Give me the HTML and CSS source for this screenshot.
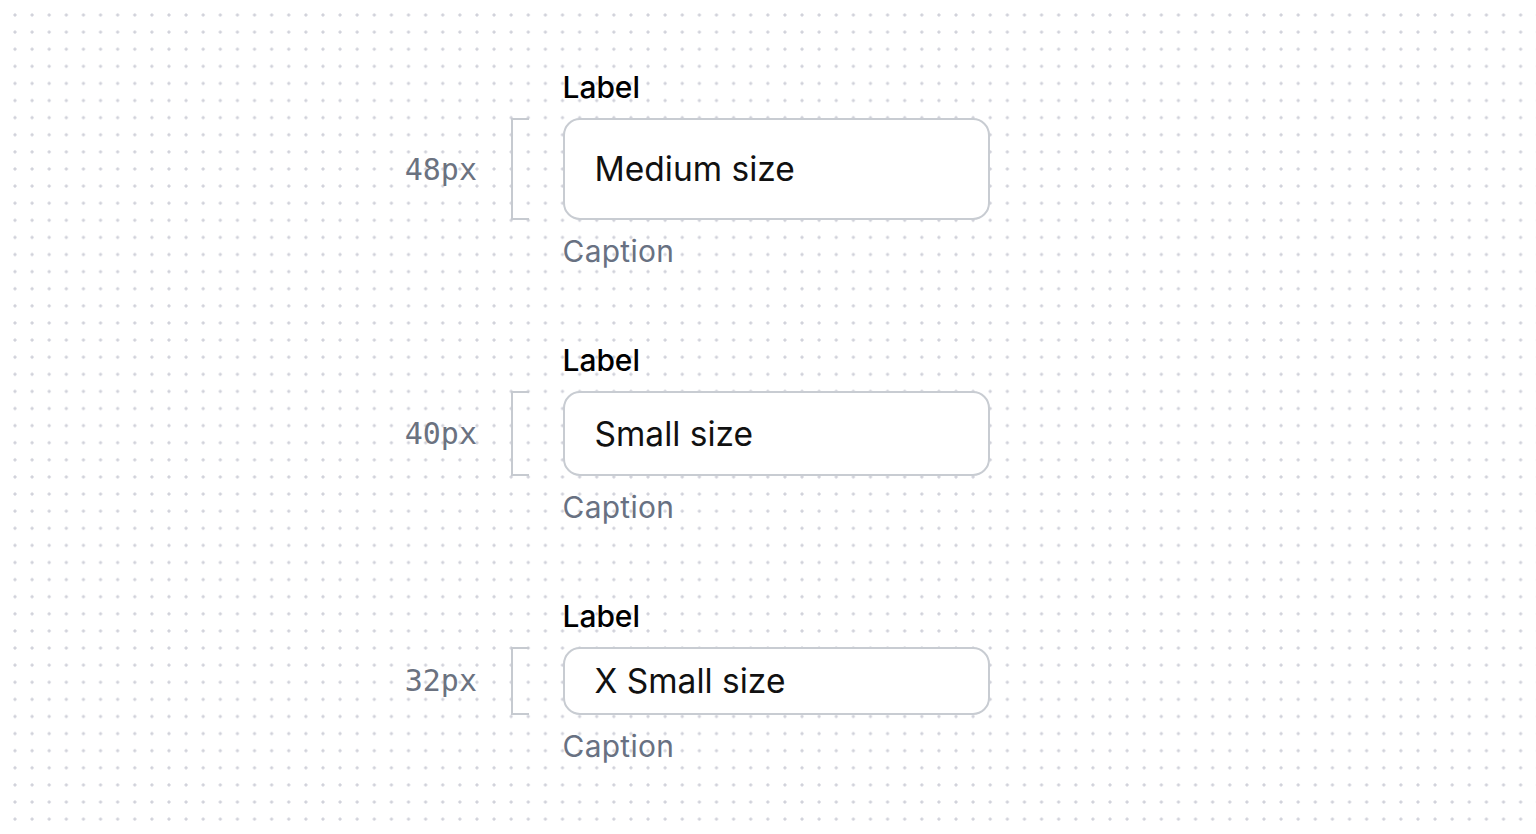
FILE: index.html
```html
<!DOCTYPE html>
<html lang="en">
<head>
    <meta charset="UTF-8">
    <meta name="viewport" content="width=device-width, initial-scale=1.0">
    <title>Input sizes</title>
    <link rel="stylesheet" href="styles.css">
</head>
<body>
    <!-- Ukuran input: medium, small, x small -->
    <main class="sheet">
        <section class="field-row size-md">
            <label class="field-label" for="input-md">Label</label>
            <span class="size-tag">48px</span>
            <span class="bracket"></span>
            <input class="field-input" id="input-md" type="text" value="Medium size">
            <span class="field-caption">Caption</span>
        </section>

        <section class="field-row size-sm">
            <label class="field-label" for="input-sm">Label</label>
            <span class="size-tag">40px</span>
            <span class="bracket"></span>
            <input class="field-input" id="input-sm" type="text" value="Small size">
            <span class="field-caption">Caption</span>
        </section>

        <section class="field-row size-xs">
            <label class="field-label" for="input-xs">Label</label>
            <span class="size-tag">32px</span>
            <span class="bracket"></span>
            <input class="field-input" id="input-xs" type="text" value="X Small size">
            <span class="field-caption">Caption</span>
        </section>
    </main>
</body>
</html>
```

FILE: styles.css
```css
/* Latar titik-titik (grid 8px, diperbesar) */
html {
    background-color: #ffffff;
    background-image: radial-gradient(circle, #cdced7 0, #d3d4dc 1.2px, rgba(255, 255, 255, 0) 2px);
    background-size: 17.11px 17.11px;
    background-position: 6.45px 6.45px;
}

body {
    margin: 0;
    font-family: Inter, "Noto Sans", sans-serif;
}

/* Susunan halaman */
.sheet {
    display: flex;
    flex-direction: column;
    gap: 73px;
    padding-top: 69.5px;
}

/* Satu baris input: label, ukuran, penanda, kolom, caption */
.field-row {
    display: grid;
    grid-template-columns: 477px 18.5px 427.75px;
    column-gap: 33.5px;
}

.field-label {
    grid-column: 3;
    grid-row: 1;
    margin-bottom: 12.3px;
    font-size: 29.9px;
    line-height: 1.2;
    font-weight: 500;
    color: #000000;
}

.size-tag {
    grid-column: 1;
    grid-row: 2;
    align-self: center;
    justify-self: end;
    font-family: "DejaVu Sans Mono", "Liberation Mono", monospace;
    font-size: 30px;
    color: #6b7280;
}

/* Penanda tinggi di samping kolom */
.bracket {
    grid-column: 2;
    grid-row: 2;
    box-sizing: border-box;
    border: 2px solid #c6cad0;
    border-right: none;
}

.field-input {
    grid-column: 3;
    grid-row: 2;
    box-sizing: border-box;
    width: 100%;
    margin: 0;
    padding: 0 30px;
    border: 2px solid #c8ccd2;
    border-radius: 17px;
    background: #ffffff;
    font-family: Inter, "Noto Sans", sans-serif;
    font-size: 33.5px;
    color: #111111;
    outline: none;
}

.field-caption {
    grid-column: 3;
    grid-row: 3;
    margin-top: 13.4px;
    font-size: 29.9px;
    line-height: 1.2;
    letter-spacing: 0.3px;
    color: #687182;
}

/* Tinggi tiap ukuran */
.size-md .field-input,
.size-md .bracket {
    height: 102.66px;
}

.size-sm .field-input,
.size-sm .bracket {
    height: 85.55px;
}

.size-xs .field-input,
.size-xs .bracket {
    height: 68.44px;
}
```
